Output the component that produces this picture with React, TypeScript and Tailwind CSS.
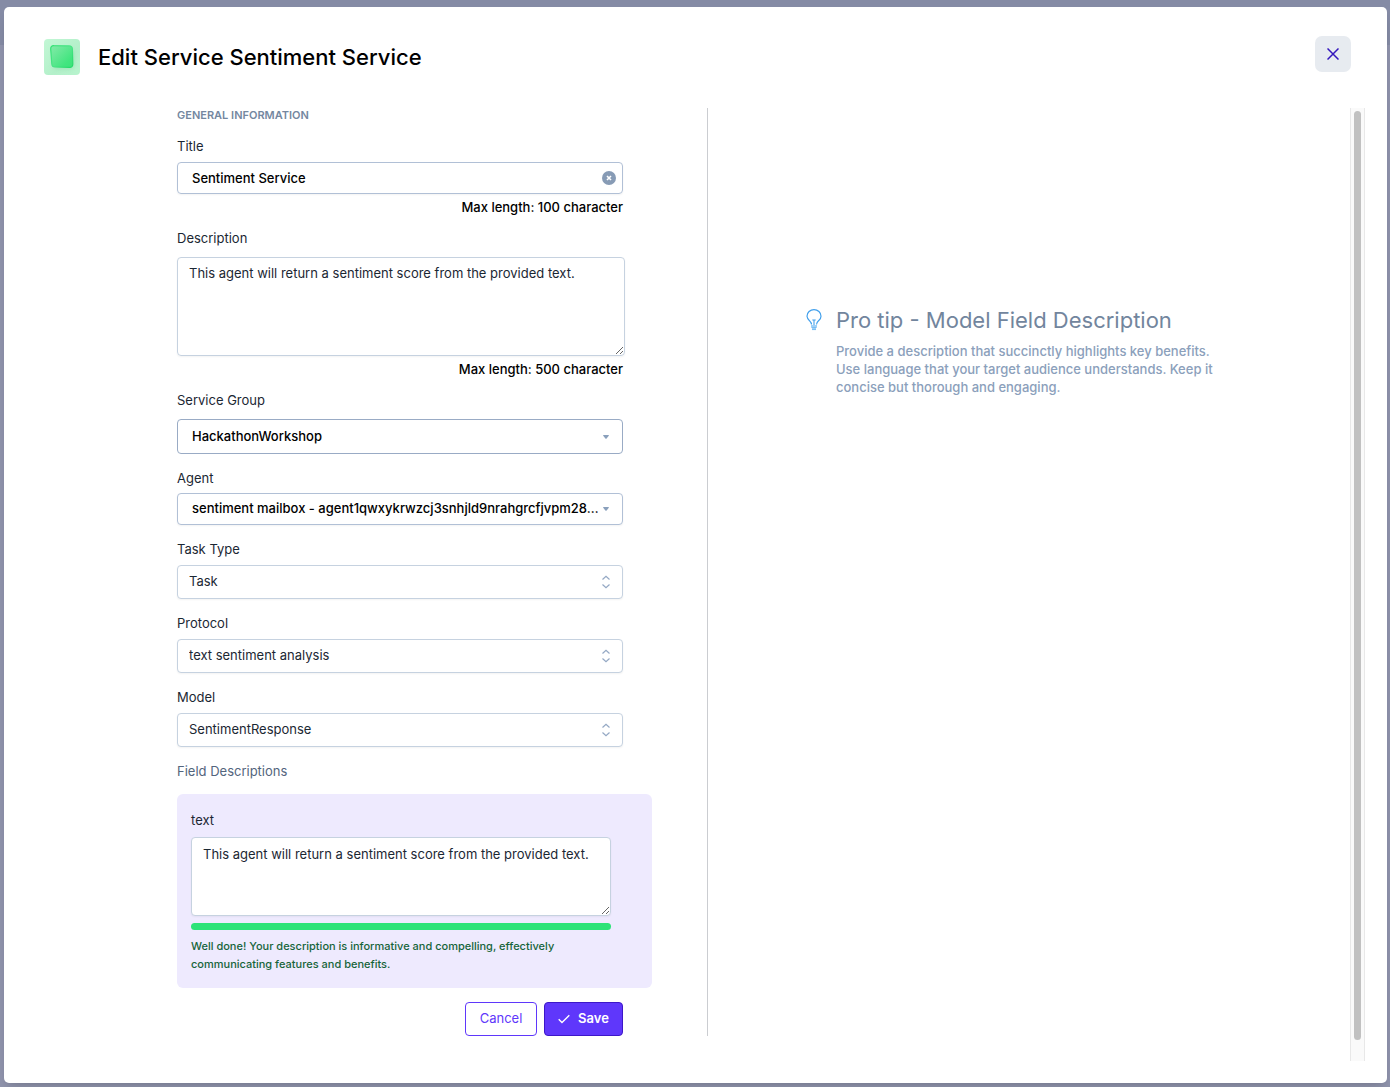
import { useState, type ReactNode } from "react";

const labelText = "block text-[13px] leading-[18px] text-[#1b2733]";

function CaretIcon() {
  return (
    <svg viewBox="0 0 6 4" className="h-1 w-1.5" aria-hidden="true">
      <path d="M0.6 0h4.8c.5 0 .7.5.4.8L3.4 3.700c-.2.2-.6.2-.8 0L.2.8C-.1.5.1 0 .6 0z" fill="#8aa0bc" />
    </svg>
  );
}

function UpDownIcon() {
  return (
    <svg viewBox="0 0 10 14" className="h-3.5 w-2.5" fill="none" stroke="#94a8c4" strokeWidth="1.2" aria-hidden="true">
      <path d="M1.5 4.5L5 1.2l3.5 3.3M1.5 9.5L5 12.8l3.5-3.3" />
    </svg>
  );
}

function SelectField({
  id,
  label,
  value,
  className,
  icon,
  gap,
}: {
  id: string;
  label: string;
  value: string;
  className: string;
  icon: ReactNode;
  gap: string;
}) {
  return (
    <div className={`flex flex-col ${gap}`}>
      <label htmlFor={id} className={labelText}>
        {label}
      </label>
      <div className="relative">
        <select
          id={id}
          className={`block w-full appearance-none truncate rounded-[4px] border bg-white pr-5 text-[13px] outline-none ${className}`}
        >
          <option>{value}</option>
        </select>
        <span className="pointer-events-none absolute inset-y-0 right-3 flex w-2.5 items-center justify-center">{icon}</span>
      </div>
    </div>
  );
}

function ServiceLogo() {
  return (
    <svg viewBox="0 0 36 36" className="size-9 shrink-0" aria-hidden="true">
      <defs>
        <linearGradient id="tile" x1="0" y1="0" x2="1" y2="1">
          <stop offset="0" stopColor="#c2f7d5" />
          <stop offset="0.6" stopColor="#b4f0ca" />
          <stop offset="1" stopColor="#b8f4ce" />
        </linearGradient>
        <linearGradient id="cube" x1="0" y1="0" x2="1" y2="1">
          <stop offset="0" stopColor="#84eaa9" />
          <stop offset="0.75" stopColor="#42e57f" />
          <stop offset="1" stopColor="#3ce37a" />
        </linearGradient>
        <linearGradient id="edge" x1="0" y1="0" x2="1" y2="1">
          <stop offset="0" stopColor="#2fe172" />
          <stop offset="0.5" stopColor="#4be587" />
          <stop offset="1" stopColor="#22d867" />
        </linearGradient>
        <filter id="soft" x="-30%" y="-30%" width="160%" height="160%">
          <feGaussianBlur stdDeviation="2" />
        </filter>
      </defs>
      <rect width="36" height="36" rx="4" fill="url(#tile)" />
      <rect x="9" y="10" width="21" height="20" rx="4" fill="#86d8a4" opacity="0.5" filter="url(#soft)" />
      <path
        d="M10 6.600l15 .3c2.200 0 3.300 1.100 3.400 3.200l.4 14.900c0 2.300-1.200 3.500-3.400 3.400l-14.400-.4c-2 0-3.100-1.100-3.200-3L6.700 10c-.1-2.200 1.100-3.500 3.300-3.400z"
        fill="url(#cube)"
        stroke="url(#edge)"
        strokeWidth="1.200"
      />
    </svg>
  );
}

function BulbIcon() {
  return (
    <svg viewBox="0 0 16 22" className="h-[22px] w-4" fill="none" stroke="#42a0ec" aria-hidden="true">
      <path d="M5.500 15.500c0-2-.8-2.600-2.200-4A6.800 6.800 0 0 1 1 7.200a7 6.600 0 0 1 14 0c0 1.900-.9 3.100-2.200 4.300-1.500 1.400-2.300 2-2.300 4" strokeWidth="1.200" />
      <path d="M8 16v-4.500M6.300 11h3.400" strokeWidth="1.100" />
      <path d="M5 16h6v2.600H5zM6 18.600h4V21H6z" fill="#9fd0f7" stroke="none" />
      <path d="M5.500 18.500h5M6 20.600h4" stroke="#6fb8f2" strokeWidth="0.800" />
    </svg>
  );
}

export default function App() {
  const [title, setTitle] = useState("Sentiment Service");
  const [description, setDescription] = useState("This agent will return a sentiment score from the provided text.");
  const [fieldText, setFieldText] = useState("This agent will return a sentiment score from the provided text.");

  return (
    <div className="flex min-h-screen flex-col bg-[linear-gradient(#858ba5_45px,#9094ad_45px)] pt-[7px] pr-[3px] pb-1 pl-1 font-[Inter,sans-serif] text-black">
      <main className="flex flex-1 flex-col rounded-[5px] bg-white pt-[29px] pb-[22px] shadow-lg">
        <header className="flex h-[72px] items-start justify-between pr-9 pl-10">
          <div className="flex items-center gap-[18px] pt-[3px]">
            <ServiceLogo />
            <h1 className="text-[22px] leading-9 font-medium">Edit Service Sentiment Service</h1>
          </div>
          <button type="button" aria-label="Close" className="flex size-9 items-center justify-center rounded-[7px] bg-[#e7ebf0]">
            <svg viewBox="0 0 12 12" className="size-3" fill="none" stroke="#3417bd" strokeWidth="1.500" aria-hidden="true">
              <path d="M.5.5l11 11M11.500.5l-11 11" />
            </svg>
          </button>
        </header>

        <div className="flex flex-1 pr-[22px]">
          <div className="grid flex-1 grid-cols-[704fr_642fr] pb-[25px]">
            <section className="flex justify-end border-r border-[#cbcdd1] pr-[55px]">
              <form className="w-[475px]" onSubmit={(e) => e.preventDefault()}>
                <div className="mr-[29px]">
                  <h2 className="text-[11px] leading-[14px] font-semibold text-[#74879f]">GENERAL INFORMATION</h2>

                  <label htmlFor="title" className={`mt-[15px] ${labelText}`}>
                    Title
                  </label>
                  <div className="relative mt-[7px]">
                    <input
                      id="title"
                      value={title}
                      onChange={(e) => setTitle(e.target.value)}
                      className="block h-8 w-full rounded-[4px] border border-[#b1c0d6] pr-8 pl-3.5 text-[13px] font-medium shadow-xs outline-none"
                    />
                    <button
                      type="button"
                      aria-label="Clear title"
                      onClick={() => setTitle("")}
                      className="absolute top-[9px] right-[7px] flex size-3.5 items-center justify-center rounded-full bg-[#879bb5]"
                    >
                      <svg viewBox="0 0 6 6" className="size-1.5" stroke="#fff" strokeWidth="1.600" aria-hidden="true">
                        <path d="M1 1l4 4M5 1L1 5" />
                      </svg>
                    </button>
                  </div>
                  <p className="mt-1 text-right text-[13px] leading-[18px] font-medium">Max length: 100 character</p>

                  <label htmlFor="description" className={`mt-[13px] ${labelText}`}>
                    Description
                  </label>
                  <div className="-mr-0.5 mt-2.5">
                    <textarea
                      id="description"
                      value={description}
                      onChange={(e) => setDescription(e.target.value)}
                      className="block h-[99px] w-full resize rounded-[4px] border border-[#c6d2e0] px-[11px] py-1.5 text-[13px] leading-[18px] text-[#1b2733] shadow-xs outline-none"
                    />
                  </div>
                  <p className="mt-1 text-right text-[13px] leading-[18px] font-medium">Max length: 500 character</p>

                  <div className="mt-[13px] flex flex-col gap-[15px]">
                    <SelectField id="group" label="Service Group" value="HackathonWorkshop" gap="gap-2.5" className="h-[35px] border-[#99abc5] pl-3.5 font-medium text-black" icon={<CaretIcon />} />
                    <SelectField id="agent" label="Agent" value="sentiment mailbox - agent1qwxykrwzcj3snhjld9nrahgrcfjvpm28…" gap="gap-1.5" className="h-8 border-[#b1c0d6] pl-3.5 font-medium text-black shadow-xs" icon={<CaretIcon />} />
                    <SelectField id="task" label="Task Type" value="Task" gap="gap-[7px]" className="h-[34px] border-[#c6d2e0] pl-[11px] text-[#1b2733] shadow-xs" icon={<UpDownIcon />} />
                    <SelectField id="protocol" label="Protocol" value="text sentiment analysis" gap="gap-[7px]" className="h-[34px] border-[#c6d2e0] pl-[11px] text-[#1b2733] shadow-xs" icon={<UpDownIcon />} />
                    <SelectField id="model" label="Model" value="SentimentResponse" gap="gap-[7px]" className="h-[34px] border-[#c6d2e0] pl-[11px] text-[#1b2733] shadow-xs" icon={<UpDownIcon />} />
                  </div>
                  <h3 className="mt-[15px] text-[13px] leading-[18px] text-[#53657d]">Field Descriptions</h3>
                </div>

                <div className="mt-3.5 rounded-[6px] bg-[#eeeafe] pt-[17px] pr-[41px] pb-[15px] pl-3.5">
                  <label htmlFor="field-text" className={labelText}>
                    text
                  </label>
                  <textarea
                    id="field-text"
                    value={fieldText}
                    onChange={(e) => setFieldText(e.target.value)}
                    className="mt-2 block h-[79px] w-full resize rounded-[4px] border border-[#c6d2e0] bg-white px-[11px] py-[7px] text-[13px] leading-[18px] text-[#1b2733] shadow-xs outline-none"
                  />
                  <div className="mt-[7px] h-[7px] rounded-full bg-[#2de378]" />
                  <p className="mt-[7px] max-w-[400px] text-[11px] leading-[18px] font-medium text-[#16643a]">
                    Well done! Your description is informative and compelling, effectively communicating features and benefits.
                  </p>
                </div>

                <div className="mt-3.5 mr-[29px] flex justify-end gap-[7px]">
                  <button type="button" className="h-[34px] w-[72px] rounded-[4px] border border-[#5f37fb] text-[13px] text-[#5f37fb]">
                    Cancel
                  </button>
                  <button type="submit" className="flex h-[34px] w-[79px] items-center justify-center gap-2 rounded-[4px] border border-[#3d17c8] bg-[#5f37fb] text-[13px] font-semibold text-white">
                    <svg viewBox="0 0 12 10" className="h-2.5 w-3" fill="none" stroke="currentColor" strokeWidth="1.400" aria-hidden="true">
                      <path d="M.7 5.200l3.300 3.300L11.300 1.300" />
                    </svg>
                    Save
                  </button>
                </div>
              </form>
            </section>

            <aside className="flex justify-center pt-[194px]">
              <div className="flex w-[446px] gap-3.5">
                <div className="pt-[7px]">
                  <BulbIcon />
                </div>
                <div className="flex-1">
                  <h2 className="text-[22px] leading-9 text-[#72859d]">Pro tip - Model Field Description</h2>
                  <p className="mt-1 max-w-[385px] text-[13px] leading-[18px] font-medium text-[#8ba0bb]">
                    Provide a description that succinctly highlights key benefits.
                    <br />
                    Use language that your target audience understands. Keep it
                    <br />
                    concise but thorough and engaging.
                  </p>
                </div>
              </div>
            </aside>
          </div>

          <div className="flex w-[15px] shrink-0 border-x border-[#e8e8e8] bg-[#fafafa] px-[3px] pt-[3px] pb-[21px]">
            <div className="flex-1 rounded-full bg-[#c1c1c1]" />
          </div>
        </div>
      </main>
    </div>
  );
}
